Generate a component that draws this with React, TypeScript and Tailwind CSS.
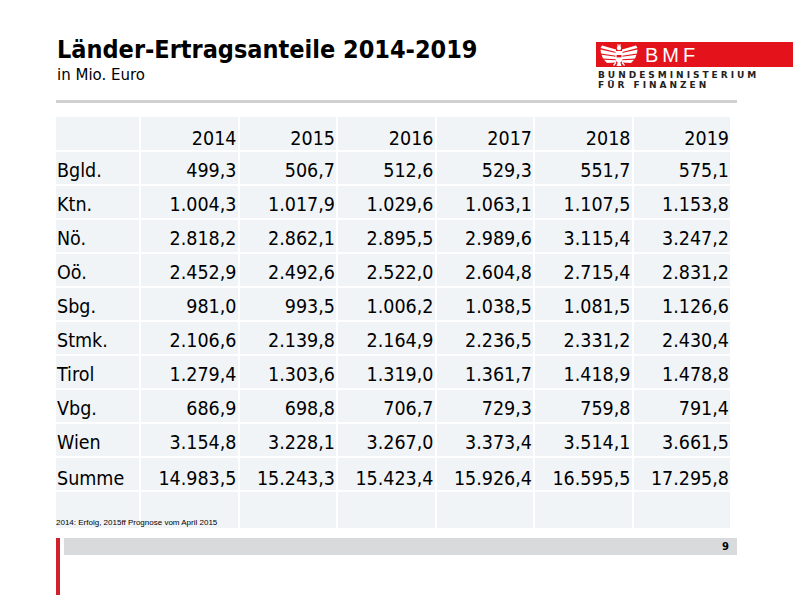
import React from "react";

const years = ["2014", "2015", "2016", "2017", "2018", "2019"];

const rows: [string, string[]][] = [
  ["Bgld.", ["499,3", "506,7", "512,6", "529,3", "551,7", "575,1"]],
  ["Ktn.", ["1.004,3", "1.017,9", "1.029,6", "1.063,1", "1.107,5", "1.153,8"]],
  ["Nö.", ["2.818,2", "2.862,1", "2.895,5", "2.989,6", "3.115,4", "3.247,2"]],
  ["Oö.", ["2.452,9", "2.492,6", "2.522,0", "2.604,8", "2.715,4", "2.831,2"]],
  ["Sbg.", ["981,0", "993,5", "1.006,2", "1.038,5", "1.081,5", "1.126,6"]],
  ["Stmk.", ["2.106,6", "2.139,8", "2.164,9", "2.236,5", "2.331,2", "2.430,4"]],
  ["Tirol", ["1.279,4", "1.303,6", "1.319,0", "1.361,7", "1.418,9", "1.478,8"]],
  ["Vbg.", ["686,9", "698,8", "706,7", "729,3", "759,8", "791,4"]],
  ["Wien", ["3.154,8", "3.228,1", "3.267,0", "3.373,4", "3.514,1", "3.661,5"]],
  ["Summe", ["14.983,5", "15.243,3", "15.423,4", "15.926,4", "16.595,5", "17.295,8"]],
];

// Bundesadler, stark vereinfacht
const Eagle = () => {
  const red = "#e3121b";
  const left = [
    "17,5.5 3,1.5 1.5,4 17,8",
    "17,9 1.5,5.5 2,9.5 17,11.8",
    "17,12.8 2.5,10.8 4,14.5 17,15.2",
    "17,16.2 5,15.8 8,19 17,18.5",
  ];
  const mirror = (p: string) =>
    p
      .split(" ")
      .map((xy) => {
        const [x, y] = xy.split(",").map(Number);
        return `${40 - x},${y}`;
      })
      .join(" ");
  return (
    <svg width="40" height="22" viewBox="0 0 40 22">
      {left.map((p) => (
        <polygon key={p} points={p} fill="white" />
      ))}
      {left.map((p) => (
        <polygon key={"r" + p} points={mirror(p)} fill="white" />
      ))}
      <path d="M18.2 1.8 L18.6 0 L20 1 L21.4 0 L21.8 1.8 Z" fill="white" />
      <circle cx="20" cy="4" r="2.2" fill="white" />
      <path d="M16.5 7 H23.5 V14 Q23.5 18 20 19.5 Q16.5 18 16.5 14 Z" fill="white" />
      <rect x="17.6" y="11" width="4.8" height="2.4" fill={red} />
      <polygon points="18.5,19 21.5,19 22.5,22 17.5,22" fill="white" />
      <path d="M17 18.5 L14.5 21.5 M23 18.5 L25.5 21.5" stroke="white" strokeWidth="1.2" />
    </svg>
  );
};

const Logo = () => (
  <div className="w-[197px] mt-[42px] mr-[1px]">
    <div className="h-[25px] bg-[#e3121b] flex items-center pl-[3px] gap-[6px]">
      <Eagle />
      <span className="font-['Liberation_Sans',Arial,sans-serif] text-[20px] leading-none text-white tracking-[4px]">
        BMF
      </span>
    </div>
    <div className="mt-[3px] pl-[2px] font-['DejaVu_Sans',sans-serif] font-bold text-[9px] leading-[10px] tracking-[3px] text-[#222]">
      <div>BUNDESMINISTERIUM</div>
      <div>FÜR FINANZEN</div>
    </div>
  </div>
);

export default function App() {
  return (
    <div className="w-[794px] h-[595px] bg-white text-black overflow-hidden flex flex-col font-['DejaVu_Sans',Verdana,sans-serif]">
      <header className="h-[100px] flex justify-between">
        <div className="pl-[57px] pt-[36px]">
          <h1 className="font-['DejaVu_Sans_Condensed','DejaVu_Sans',sans-serif] font-bold text-[25px] leading-[28px]">
            Länder-Ertragsanteile 2014-2019
          </h1>
          <p className="mt-[2px] text-[15px] leading-[18px]">in Mio. Euro</p>
        </div>
        <Logo />
      </header>

      <div className="ml-[56px] w-[681px] h-[3px] bg-[#d0d0d0]" />

      <div className="ml-[56px] mt-[14px] w-[674px] grid grid-cols-[83px_repeat(6,1fr)] grid-rows-[33px_repeat(10,32px)_36px] gap-[2px] font-['DejaVu_Sans_Condensed','DejaVu_Sans',sans-serif] text-[19.5px] leading-[23px]">
        <div className="bg-[#f0f4f7]" />
        {years.map((y) => (
          <div key={y} className="bg-[#f0f4f7] flex items-center justify-end pr-[1px] pt-[9px]">
            {y}
          </div>
        ))}
        {rows.map(([label, vals]) => {
          const pad = label === "Summe" ? "pt-[9px]" : "pt-[4px]";
          return (
            <React.Fragment key={label}>
              <div className={`bg-[#f0f4f7] flex items-center pl-[1px] ${pad}`}>{label}</div>
              {vals.map((v, i) => (
                <div key={i} className={`bg-[#f0f4f7] flex items-center justify-end pr-[1px] ${pad}`}>
                  {v}
                </div>
              ))}
            </React.Fragment>
          );
        })}
        <div className="bg-[#f0f4f7] z-10 flex items-end">
          <span className="whitespace-nowrap font-['Liberation_Sans',Arial,sans-serif] text-[8px] leading-[9px] pb-[1px]">
            2014: Erfolg, 2015ff Prognose vom April 2015
          </span>
        </div>
        {years.map((y) => (
          <div key={"e" + y} className="bg-[#f0f4f7]" />
        ))}
      </div>

      <footer className="mt-[10px] flex-1 flex pl-[56px]">
        <div className="w-[4px] bg-[#d0202a]" />
        <div className="ml-[4px] w-[673px] h-[17px] bg-[#d9dadc] flex items-center justify-end pr-[8px]">
          <span className="text-[10px] font-bold leading-none">9</span>
        </div>
      </footer>
    </div>
  );
}
